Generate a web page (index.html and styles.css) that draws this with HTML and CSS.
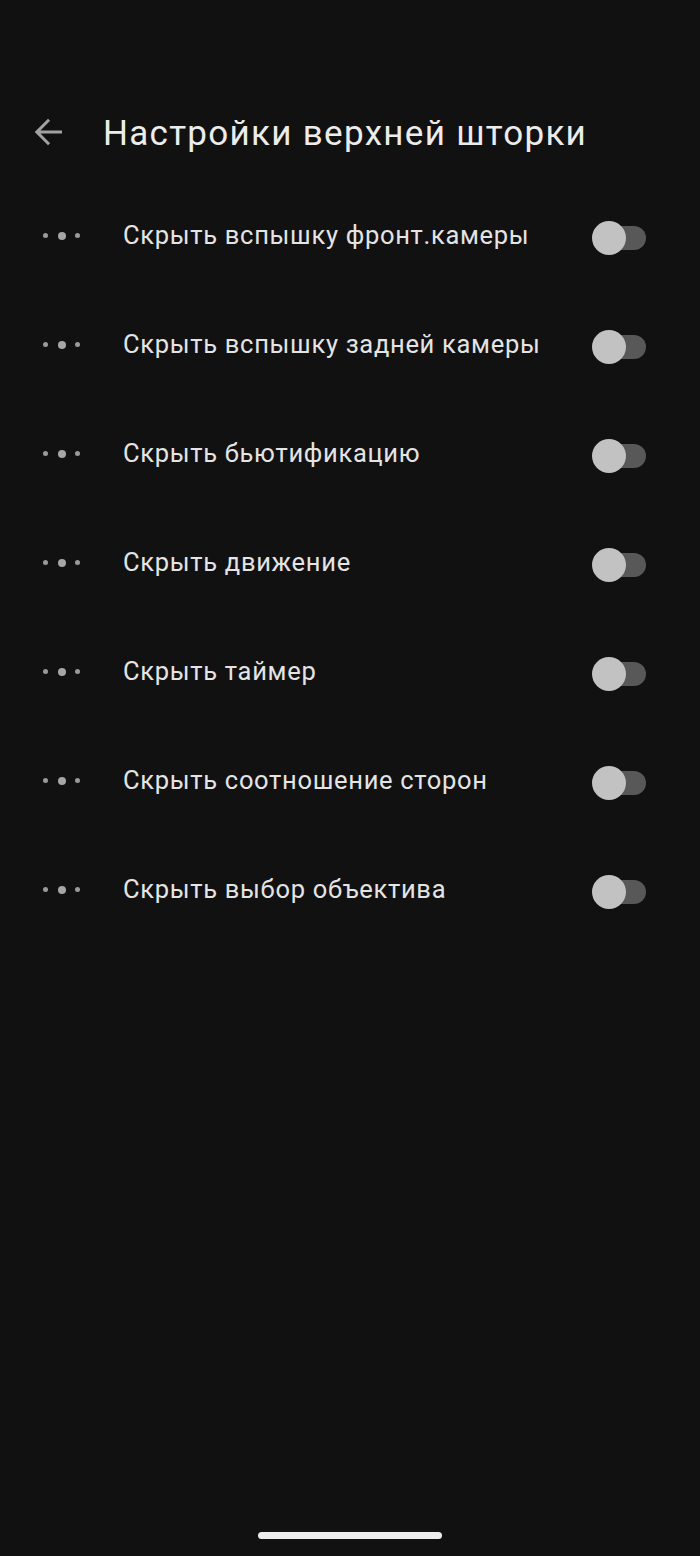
FILE: index.html
```html
<!DOCTYPE html>
<html lang="ru">
<head>
    <meta charset="UTF-8">
    <meta name="viewport" content="width=device-width, initial-scale=1.0">
    <title>Настройки верхней шторки</title>
    <link rel="stylesheet" href="styles.css">
</head>
<body>

    <div class="screen">
        <!-- Toolbar -->
        <header class="toolbar">
            <button class="back" aria-label="Назад">
                <svg width="42" height="42" viewBox="0 0 24 24">
                    <path d="M20 11.1H7.7l5.5-5.5L12 4.4l-7.6 7.6 7.6 7.6 1.2-1.2-5.5-5.5H20v-1.8z" fill="currentColor"/>
                </svg>
            </button>
            <h1>Настройки верхней шторки</h1>
        </header>

        <!-- Settings list -->
        <ul class="settings">
            <li class="row">
                <span class="handle"><i></i><i></i><i></i></span>
                <span class="label">Скрыть вспышку фронт.камеры</span>
                <span class="switch"></span>
            </li>
            <li class="row">
                <span class="handle"><i></i><i></i><i></i></span>
                <span class="label">Скрыть вспышку задней камеры</span>
                <span class="switch"></span>
            </li>
            <li class="row">
                <span class="handle"><i></i><i></i><i></i></span>
                <span class="label">Скрыть бьютификацию</span>
                <span class="switch"></span>
            </li>
            <li class="row">
                <span class="handle"><i></i><i></i><i></i></span>
                <span class="label">Скрыть движение</span>
                <span class="switch"></span>
            </li>
            <li class="row">
                <span class="handle"><i></i><i></i><i></i></span>
                <span class="label">Скрыть таймер</span>
                <span class="switch"></span>
            </li>
            <li class="row">
                <span class="handle"><i></i><i></i><i></i></span>
                <span class="label">Скрыть соотношение сторон</span>
                <span class="switch"></span>
            </li>
            <li class="row">
                <span class="handle"><i></i><i></i><i></i></span>
                <span class="label">Скрыть выбор объектива</span>
                <span class="switch"></span>
            </li>
        </ul>

        <!-- Gesture bar -->
        <div class="home-bar"></div>
    </div>

</body>
</html>
```

FILE: styles.css
```css
/* Global Styles */
* {
    margin: 0;
    padding: 0;
    box-sizing: border-box;
}

body {
    background: #111111;
    color: #e6e6e6;
    font-family: Roboto, 'Noto Sans', sans-serif;
}

.screen {
    height: 1556px;
    display: flex;
    flex-direction: column;
    padding-top: 100px;
}

/* Toolbar */
.toolbar {
    height: 66px;
    display: flex;
    align-items: center;
    padding-left: 27px;
    margin-bottom: 17px;
}

.back {
    width: 42px;
    height: 42px;
    background: none;
    border: none;
    color: #a2a2a2;
    display: flex;
    margin-top: -2px;
}

.toolbar h1 {
    font-size: 35px;
    font-weight: 400;
    color: #ececec;
    margin-left: 34px;
    letter-spacing: 1.3px;
}

/* Settings list */
.settings {
    list-style: none;
}

.row {
    height: 109px;
    display: flex;
    align-items: center;
    padding: 0 54px 0 43px;
}

.handle {
    width: 37px;
    display: flex;
    align-items: center;
    justify-content: space-between;
    padding-bottom: 4px;
}

.handle i {
    width: 5px;
    height: 5px;
    border-radius: 50%;
    background: #9a9a9a;
}

.handle i:nth-child(2) {
    width: 8px;
    height: 8px;
    background: #a6a6a6;
}

.label {
    flex: 1;
    margin-left: 43px;
    font-size: 25.5px;
    color: #e4e4e4;
    letter-spacing: 0.7px;
    padding-bottom: 5px;
}

/* Switch (off state) */
.switch {
    position: relative;
    width: 54px;
    height: 24px;
    margin-top: 1px;
}

.switch::before {
    content: "";
    position: absolute;
    left: 8px;
    right: 0;
    top: 0;
    bottom: 0;
    border-radius: 12px;
    background: #585858;
}

.switch::after {
    content: "";
    position: absolute;
    left: 0;
    top: -5px;
    width: 34px;
    height: 34px;
    border-radius: 50%;
    background: #c2c2c2;
}

/* Gesture bar */
.home-bar {
    margin-top: auto;
    margin-bottom: 17px;
    align-self: center;
    width: 184px;
    height: 7px;
    border-radius: 4px;
    background: #ececec;
}
```
